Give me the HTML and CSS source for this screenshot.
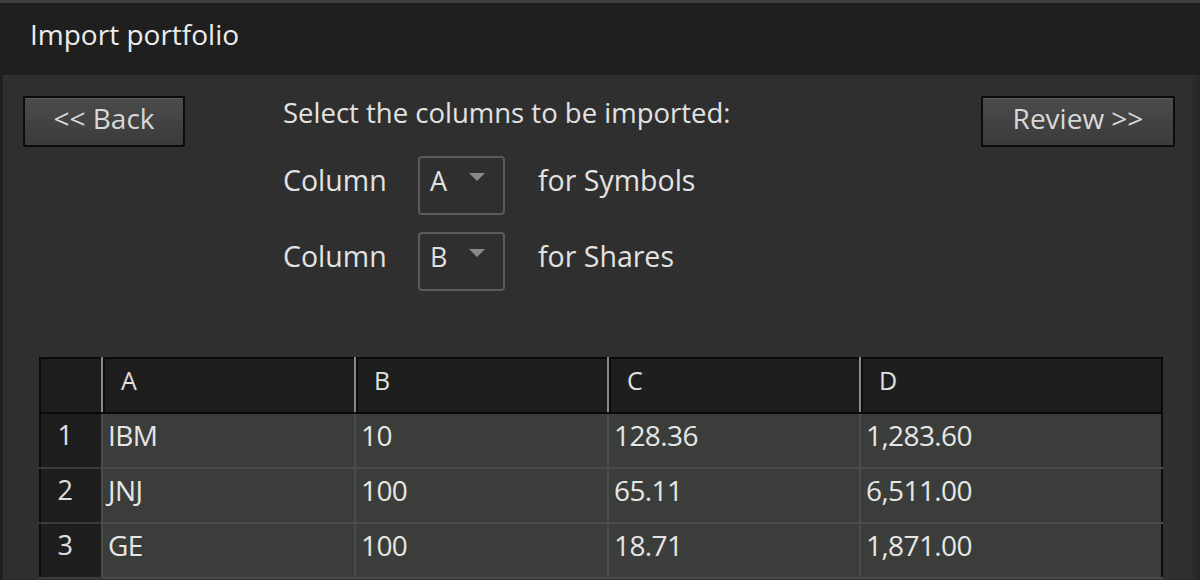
FILE: index.html
```html
<!DOCTYPE html>
<html>
<head>
<meta charset="utf-8">
<link rel="stylesheet" href="styles.css">
</head>
<body>
<div class="window">
  <header class="titlebar">Import portfolio</header>
  <main class="panel">
    <div class="toolbar">
      <button class="btn back">&lt;&lt; Back</button>
      <div class="chooser">
        <div class="prompt">Select the columns to be imported:</div>
        <div class="choice">
          <span class="lbl">Column</span>
          <span class="select"><span class="val">A</span><span class="arrow"></span></span>
          <span class="for">for Symbols</span>
        </div>
        <div class="choice">
          <span class="lbl">Column</span>
          <span class="select"><span class="val">B</span><span class="arrow"></span></span>
          <span class="for">for Shares</span>
        </div>
      </div>
      <button class="btn review">Review &gt;&gt;</button>
    </div>
    <table class="sheet">
      <colgroup>
        <col class="c-rn"><col class="c-a"><col class="c-b"><col class="c-c"><col class="c-d">
      </colgroup>
      <thead>
        <tr><th class="corner"></th><th>A</th><th>B</th><th>C</th><th>D</th></tr>
      </thead>
      <tbody>
        <tr><th class="rn">1</th><td>IBM</td><td>10</td><td>128.36</td><td>1,283.60</td></tr>
        <tr><th class="rn">2</th><td>JNJ</td><td>100</td><td>65.11</td><td>6,511.00</td></tr>
        <tr><th class="rn">3</th><td>GE</td><td>100</td><td>18.71</td><td>1,871.00</td></tr>
      </tbody>
    </table>
  </main>
</div>
</body>
</html>
```

FILE: styles.css
```css
html, body {
  margin: 0;
  padding: 0;
  background: #1f1f1f;
  width: 1200px;
  height: 580px;
  overflow: hidden;
}
body {
  font-family: "Open Sans", "Noto Sans", sans-serif;
  color: #e2e2e2;
}
.window {
  border-top: 3px solid #3e3e3e;
  height: 577px;
  display: flex;
  flex-direction: column;
}
.titlebar {
  flex: 0 0 72px;
  height: 72px;
  box-sizing: border-box;
  padding: 13px 0 0 30px;
  font-size: 28px;
  line-height: 36px;
  color: #ececec;
  background: #1f1f1f;
}
.panel {
  flex: 1 1 auto;
  min-height: 0;
  overflow: hidden;
  margin-left: 3px;
  width: 1197px;
  box-sizing: border-box;
  background: linear-gradient(to right, #2f2f2f 0, #2f2f2f 1186px, #262626 1197px);
  padding: 21px 25px 0 36px;
}
.toolbar {
  display: flex;
  align-items: flex-start;
  margin-left: -16px;
}
.btn {
  height: 51px;
  box-sizing: border-box;
  border: 2px solid #0c0c0c;
  border-radius: 2px;
  background: linear-gradient(#4b4b4b, #3b3b3b);
  box-shadow: inset 0 1px 0 #5a5a5a;
  color: #d8d8d8;
  font-family: "Open Sans", "Noto Sans", sans-serif;
  font-size: 28px;
  padding: 0 0 7px 0;
}
.back { width: 162px; }
.review { width: 194px; flex: 0 0 194px; margin-left: auto; }
.chooser {
  margin-left: 98px;
  display: flex;
  flex-direction: column;
}
.prompt {
  font-size: 27.5px;
  line-height: 36px;
  margin-top: -1px;
}
.choice {
  display: flex;
  align-items: center;
  font-size: 28.5px;
  margin-top: 25px;
}
.choice + .choice { margin-top: 17px; }
.lbl, .for { padding-bottom: 11px; }
.lbl { width: 135px; }
.select {
  width: 87px;
  height: 59px;
  box-sizing: border-box;
  border: 2px solid #5b5b5b;
  border-radius: 4px;
  display: flex;
  align-items: center;
  padding: 0 0 10px 10px;
  position: relative;
}
.val { font-size: 27px; color: #e0e0e0; }
.arrow {
  position: absolute;
  left: 49px;
  top: 15px;
  width: 0;
  height: 0;
  border-left: 8px solid transparent;
  border-right: 8px solid transparent;
  border-top: 8px solid #8a8a8a;
}
.for { margin-left: 33px; }

.sheet {
  margin-top: 66px;
  border-collapse: collapse;
  width: 1124px;
  table-layout: fixed;
  border: 2px solid #0a0a0a;
  border-bottom: none;
  font-size: 28px;
  line-height: 36px;
  letter-spacing: -0.6px;
}
.c-rn { width: 62px; }
.c-a { width: 253px; }
.c-b { width: 253px; }
.c-c { width: 252px; }
.sheet th, .sheet td {
  padding: 0;
  text-align: left;
  font-weight: normal;
}
.sheet thead th {
  height: 42px;
  background: #1e1e1e;
  border-bottom: 2px solid #0a0a0a;
  border-left: 2px solid #8a8a8a;
  box-shadow: inset 2px 0 0 #0d0d0d;
  padding: 0 0 11px 18px;
  color: #e0e0e0;
  font-size: 25px;
  line-height: 34px;
  letter-spacing: 0;
}
.sheet thead th.corner {
  border-left: none;
  box-shadow: none;
  padding: 0;
}
.sheet tbody th.rn {
  height: 42px;
  background: #1e1e1e;
  text-align: center;
  padding: 0 12px 11px 0;
  border-top: 2px solid #3a3a3a;
  color: #e0e0e0;
  font-size: 27px;
}
.sheet tbody tr:first-child th.rn,
.sheet tbody tr:first-child td { border-top: none; }
.sheet td {
  height: 42px;
  background: #3b3d3a;
  border-top: 2px solid #4a4c49;
  border-left: 2px solid #4a4c49;
  padding: 0 0 11px 5px;
  color: #e6e6e6;
}
.sheet tbody tr:last-child td { border-bottom: 2px solid #4a4c49; }
.sheet tbody tr:last-child th.rn { border-bottom: 2px solid #3a3a3a; }
```
